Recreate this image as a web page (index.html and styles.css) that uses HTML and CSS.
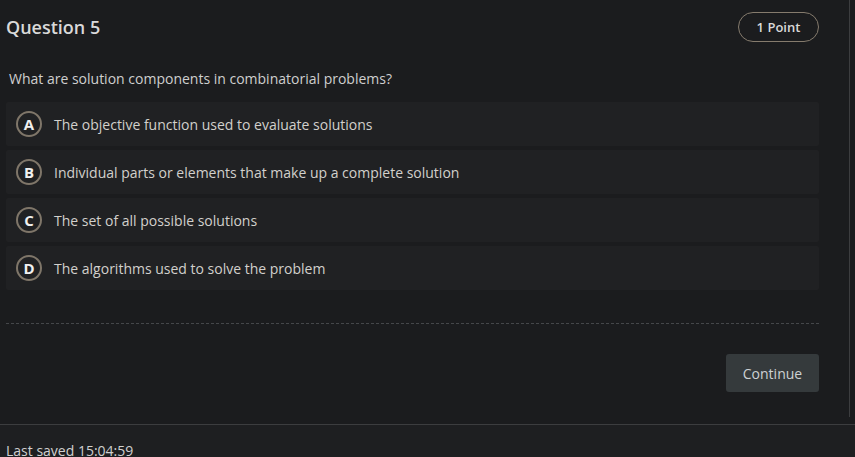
FILE: index.html
```html
<!DOCTYPE html>
<html>
<head>
<meta charset="utf-8">
<link rel="stylesheet" href="styles.css">
</head>
<body>
<div class="main">
  <div class="header">
    <h1 class="title">Question 5</h1>
    <span class="badge">1 Point</span>
  </div>
  <p class="question">What are solution components in combinatorial problems?</p>
  <div class="options">
    <div class="option"><span class="letter">A</span><span class="text">The objective function used to evaluate solutions</span></div>
    <div class="option"><span class="letter">B</span><span class="text">Individual parts or elements that make up a complete solution</span></div>
    <div class="option"><span class="letter">C</span><span class="text">The set of all possible solutions</span></div>
    <div class="option"><span class="letter">D</span><span class="text">The algorithms used to solve the problem</span></div>
  </div>
  <div class="divider"></div>
  <div class="actions">
    <button class="continue">Continue</button>
  </div>
</div>
<div class="footer">Last saved 15:04:59</div>
</body>
</html>
```
FILE: styles.css
```css
* { box-sizing: border-box; }
html, body { margin: 0; padding: 0; }
body {
  background: #1b1c1e;
  font-family: "Open Sans", "Noto Sans", sans-serif;
  color: #d6d6d6;
  overflow: hidden;
  height: 457px;
}
.main {
  width: 850px;
  height: 417px;
  border-right: 1px solid #3c3d3f;
  padding: 12px 30px 0 6px;
}
.header {
  display: flex;
  justify-content: space-between;
  align-items: center;
  height: 30px;
}
.title {
  margin: 0;
  font-size: 18px;
  font-weight: 600;
  color: #d9d9d9;
  line-height: 30px;
}
.badge {
  display: flex;
  align-items: center;
  justify-content: center;
  width: 81px;
  height: 30px;
  border: 1px solid #857b6d;
  border-radius: 15px;
  font-size: 13px;
  font-weight: 600;
  color: #d9d9d9;
}
.question {
  margin: 28px 0 14px 3px;
  font-size: 14px;
  line-height: 18px;
  color: #cfcfcf;
}
.options {
  display: flex;
  flex-direction: column;
  gap: 4px;
}
.option {
  display: flex;
  align-items: center;
  gap: 12px;
  height: 44px;
  padding-left: 10px;
  background: #202123;
  border-radius: 2px;
}
.letter {
  display: flex;
  align-items: center;
  justify-content: center;
  width: 26px;
  height: 26px;
  border: 2px solid #7f7669;
  border-radius: 50%;
  font-size: 15px;
  font-weight: 700;
  color: #f0f0f0;
}
.text {
  font-size: 14px;
  color: #d2d0cc;
}
.divider {
  margin-top: 33px;
  border-top: 1px dashed #45474a;
}
.actions {
  display: flex;
  justify-content: flex-end;
  margin-top: 30px;
}
.continue {
  width: 93px;
  height: 38px;
  background: #353a3c;
  border: none;
  border-radius: 3px;
  font-family: "Open Sans", "Noto Sans", sans-serif;
  font-size: 14px;
  color: #cdd1d3;
}
.footer {
  margin-top: 7px;
  border-top: 1px solid #3c3d3f;
  background: #1e1f21;
  padding: 16px 0 0 6px;
  font-size: 14px;
  line-height: 20px;
  color: #d0d0d0;
  height: 40px;
}
```
